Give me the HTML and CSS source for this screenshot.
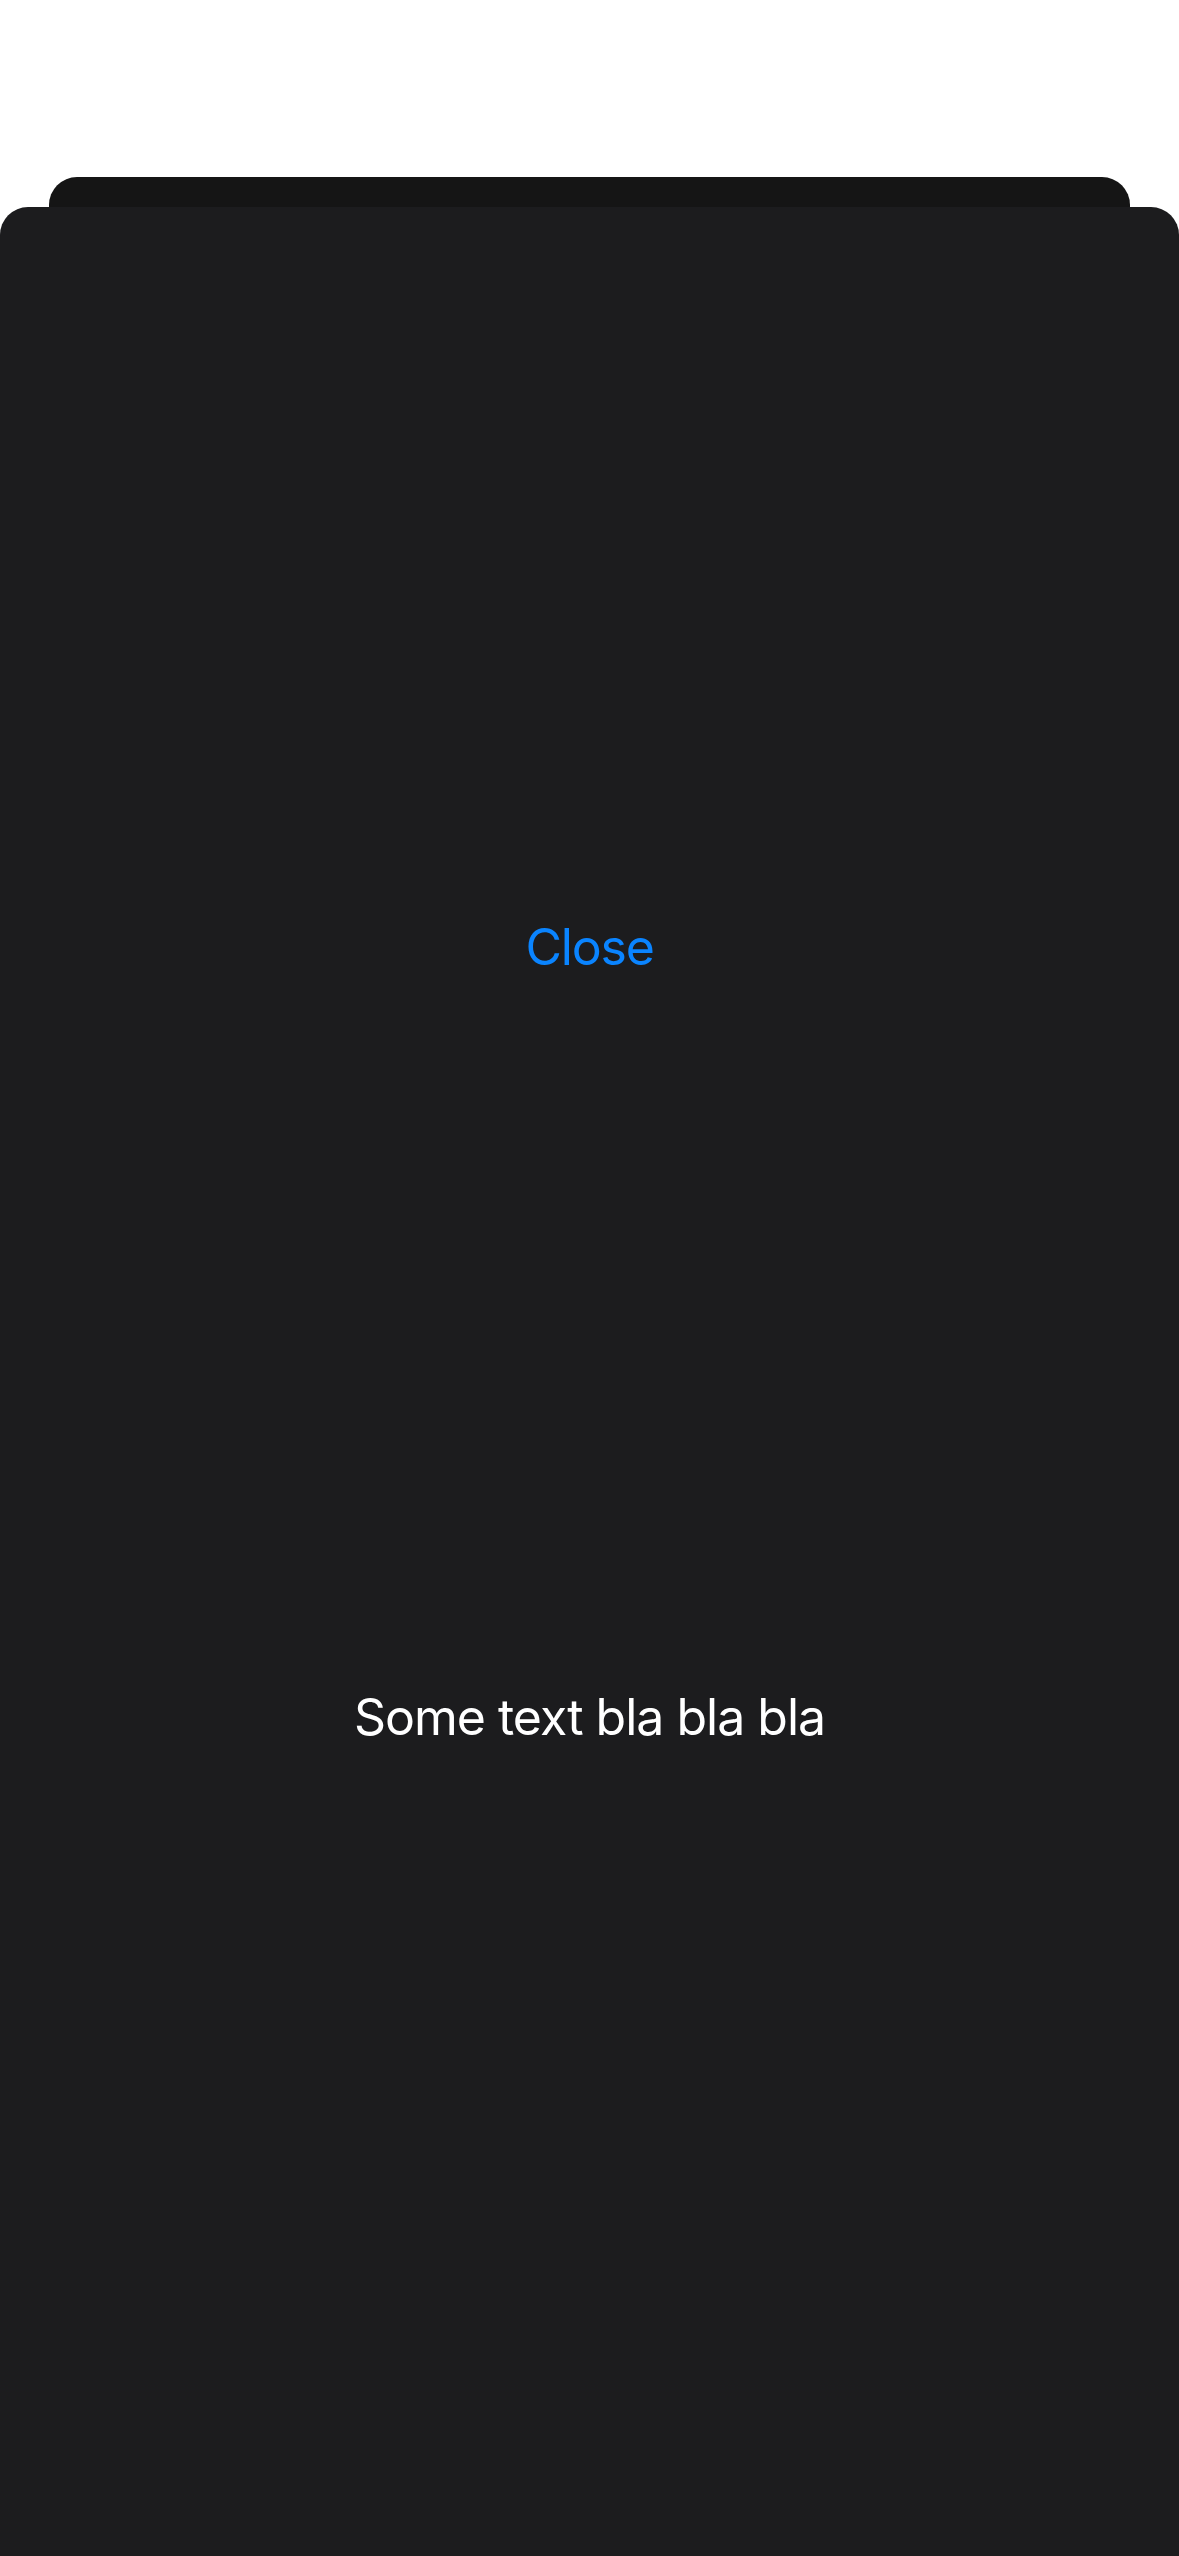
FILE: index.html
```html
<!DOCTYPE html>
<html>
<head>
<meta charset="utf-8">
<link rel="stylesheet" href="styles.css">
</head>
<body>
<div class="stack">
  <div class="back-card"></div>
  <div class="sheet">
    <button class="close-btn">Close</button>
    <p class="body-text">Some text bla bla bla</p>
  </div>
</div>
</body>
</html>
```
FILE: styles.css
```css
html, body {
  margin: 0;
  padding: 0;
  background: #ffffff;
}
.stack {
  padding-top: 177px;
  height: 2556px;
  box-sizing: border-box;
  display: flex;
  flex-direction: column;
  overflow: hidden;
}
.back-card {
  height: 30px;
  margin: 0 49px;
  background: #151515;
  border-radius: 28px 28px 0 0;
  flex: none;
}
.sheet {
  flex: 1;
  background: #1c1c1e;
  border-radius: 28px 28px 0 0;
  display: flex;
  flex-direction: column;
  align-items: center;
  padding-top: 710px;
  font-family: Inter, "Noto Sans", sans-serif;
}
.close-btn {
  font-family: inherit;
  font-size: 50px;
  line-height: 60px;
  height: 60px;
  letter-spacing: -1.2px;
  color: #0a84ff;
  background: none;
  border: 0;
  padding: 0;
  margin: 0;
}
.body-text {
  margin: 710px 0 0;
  font-size: 50px;
  line-height: 60px;
  letter-spacing: -1px;
  color: #ffffff;
}
```
